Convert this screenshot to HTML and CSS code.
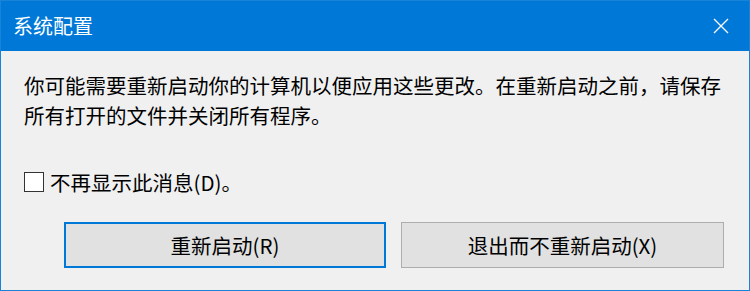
FILE: index.html
```html
<!DOCTYPE html>
<html lang="zh-CN">

<head>
    <meta charset="UTF-8">
    <title>系统配置</title>
    <link rel="stylesheet" href="styles.css">
</head>

<body>
    <div class="dialog">
        <div class="titlebar">
            <span class="title">系统配置</span>
            <span class="close">
                <svg width="16" height="16" viewBox="0 0 16 16">
                    <path d="M1 1 L15 15 M15 1 L1 15" stroke="#fff" stroke-width="1.3" fill="none" />
                </svg>
            </span>
        </div>
        <div class="content">
            <p class="message">你可能需要重新启动你的计算机以便应用这些更改。在重新启动之前，请保存所有打开的文件并关闭所有程序。</p>
            <label class="check">
                <span class="box"></span>
                <span>不再显示此消息(D)。</span>
            </label>
            <div class="actions">
                <button class="btn default">重新启动(R)</button>
                <button class="btn">退出而不重新启动(X)</button>
            </div>
        </div>
    </div>
</body>

</html>
```

FILE: styles.css
```css
* {
    box-sizing: border-box;
}

body {
    margin: 0;
    font-family: "Noto Sans CJK SC", "Noto Sans", sans-serif;
}

.dialog {
    width: 750px;
    height: 291px;
    border: 1px solid #1883d7;
    background-color: #f0f0f0;
    display: flex;
    flex-direction: column;
}

.titlebar {
    height: 50px;
    background-color: #0078d7;
    color: #fff;
    display: flex;
    align-items: center;
    justify-content: space-between;
    padding: 0 20px 0 12px;
}

.title {
    font-size: 20px;
    margin-top: -2px;
}

.close {
    display: flex;
    margin-top: -1px;
}

.content {
    padding: 19px 0 0 23px;
}

.message {
    margin: 0;
    width: 705px;
    font-size: 20.5px;
    line-height: 30px;
    color: #000;
}

.check {
    display: flex;
    align-items: center;
    gap: 6px;
    margin-top: 41px;
    font-size: 20.5px;
    line-height: 22px;
}

.box {
    width: 20px;
    height: 20px;
    border: 1px solid #333;
    background-color: #fff;
}

.actions {
    display: flex;
    gap: 15px;
    margin: 29px 0 0 40px;
}

.btn {
    width: 323px;
    height: 46px;
    background-color: #e1e1e1;
    border: 1px solid #adadad;
    font-family: inherit;
    font-size: 20.5px;
    color: #000;
    padding: 0;
}

.btn.default {
    width: 322px;
    border: 2px solid #0078d7;
}
```
